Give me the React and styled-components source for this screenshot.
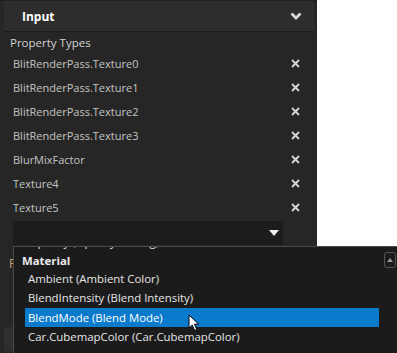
import React from "react";
import styled, { createGlobalStyle } from "styled-components";

const GlobalStyle = createGlobalStyle`
  html, body {
    margin: 0;
    padding: 0;
    background: #ffffff;
  }
  body {
    font-family: "Open Sans", "Noto Sans", sans-serif;
    -webkit-font-smoothing: antialiased;
  }
`;

const propertyTypes = [
  "BlitRenderPass.Texture0",
  "BlitRenderPass.Texture1",
  "BlitRenderPass.Texture2",
  "BlitRenderPass.Texture3",
  "BlurMixFactor",
  "Texture4",
  "Texture5",
];

const materialItems = [
  { label: "Ambient (Ambient Color)" },
  { label: "BlendIntensity (Blend Intensity)" },
  { label: "BlendMode (Blend Mode)", selected: true },
  { label: "Car.CubemapColor (Car.CubemapColor)" },
];

function ChevronDown() {
  return (
    <svg width="12" height="8" viewBox="0 0 12 8">
      <path d="M1.5 1.5 L6 6 L10.5 1.5" fill="none" stroke="#d9d9d9" strokeWidth="2.8" />
    </svg>
  );
}

function CloseIcon() {
  return (
    <svg width="9" height="9" viewBox="0 0 9 9">
      <path d="M1 1 L8 8 M8 1 L1 8" stroke="#d6d6d6" strokeWidth="1.8" />
    </svg>
  );
}

function Caret() {
  return (
    <svg width="10" height="6" viewBox="0 0 10 6">
      <path d="M0 0 H10 L5 6 Z" fill="#f0f0f0" />
    </svg>
  );
}

function Pointer() {
  return (
    <svg width="14" height="18" viewBox="0 0 14 18">
      <path
        d="M1 1 L1 14 L4.2 11 L6.6 16.5 L8.8 15.5 L6.5 10.2 L10.8 10.2 Z"
        fill="#ffffff"
        stroke="#000000"
        strokeWidth="1"
      />
    </svg>
  );
}

function ScrollUp() {
  return (
    <svg width="6" height="4" viewBox="0 0 6 4">
      <path d="M0 4 L3 0 L6 4 Z" fill="#9a9a9a" />
    </svg>
  );
}

export default function App() {
  return (
    <>
      <GlobalStyle />
      <Stage>
        <Panel>
          <Header>
            <HeaderTitle>Input</HeaderTitle>
            <ChevronDown />
          </Header>
          <Body>
            <SectionLabel>Property Types</SectionLabel>
            {propertyTypes.map((name) => (
              <Row key={name}>
                <RowText>{name}</RowText>
                <RemoveButton>
                  <CloseIcon />
                </RemoveButton>
              </Row>
            ))}
            <ComboBox>
              <Caret />
            </ComboBox>
            <NextLabel>P</NextLabel>
            <LowerBlock />
          </Body>
        </Panel>

        <Popup>
          <PopupList>
            <ClippedItem>Opacity (Opacity Scaling)</ClippedItem>
            <GroupTitle>Material</GroupTitle>
            {materialItems.map((item) => (
              <Item key={item.label} $selected={item.selected}>
                {item.label}
                {item.selected && (
                  <CursorSpot>
                    <Pointer />
                  </CursorSpot>
                )}
              </Item>
            ))}
          </PopupList>
          <ScrollBar>
            <ScrollButton>
              <ScrollUp />
            </ScrollButton>
          </ScrollBar>
        </Popup>
      </Stage>
    </>
  );
}

const Stage = styled.div`
  position: relative;
  width: 397px;
  height: 353px;
  overflow: hidden;
  background: #ffffff;
`;

const Panel = styled.div`
  width: 317px;
  height: 353px;
  background: #262626;
  border-top: 1px solid #1f1f1f;
  box-sizing: border-box;
  display: flex;
  flex-direction: column;
  overflow: hidden;
`;

const Header = styled.div`
  flex-shrink: 0;
  margin-left: 4px;
  margin-right: 3px;
  height: 30px;
  background: #2d2d2d;
  border-bottom: 1px solid #1c1c1c;
  display: flex;
  align-items: center;
  justify-content: space-between;
  padding: 0 12px 0 18px;
`;

const HeaderTitle = styled.span`
  color: #ffffff;
  font-weight: 700;
  font-size: 12px;
`;

const Body = styled.div`
  flex-shrink: 0;
  display: flex;
  flex-direction: column;
  padding-top: 3px;
`;

const SectionLabel = styled.div`
  color: #d2d2d2;
  font-size: 11.5px;
  line-height: 16px;
  padding-left: 10px;
`;

const Row = styled.div`
  height: 24px;
  display: flex;
  align-items: center;
  justify-content: space-between;
  padding-left: 13px;
  padding-right: 17px;
`;

const RowText = styled.span`
  color: #c4c4c4;
  font-size: 11px;
`;

const RemoveButton = styled.span`
  display: flex;
  align-items: center;
`;

const ComboBox = styled.div`
  margin: 2px 0 0 13px;
  width: 270px;
  height: 24px;
  background: #1c1c1c;
  display: flex;
  align-items: center;
  justify-content: flex-end;
  padding-right: 4px;
  box-sizing: border-box;
`;

const NextLabel = styled.div`
  margin: 12px 0 0 9px;
  font-size: 12px;
  color: #c8a070;
  line-height: 14px;
`;

const LowerBlock = styled.div`
  margin: 56px 0 0 4px;
  width: 9px;
  height: 24px;
  background: #2f2f2f;
`;

const Popup = styled.div`
  position: absolute;
  left: 13px;
  top: 246px;
  width: 400px;
  height: 120px;
  background: #1b1b1b;
  border: 1px solid #4a4a4a;
  box-sizing: border-box;
  display: flex;
`;

const PopupList = styled.div`
  width: 365px;
  box-sizing: border-box;
  flex-shrink: 0;
  overflow: hidden;
  display: flex;
  flex-direction: column;
  padding-left: 11px;
`;

const ClippedItem = styled.div`
  margin-top: -15px;
  padding-left: 4px;
  font-size: 11.4px;
  line-height: 19.5px;
  color: #e6e6e6;
`;

const GroupTitle = styled.div`
  font-weight: 700;
  font-size: 11.4px;
  line-height: 17px;
  color: #ececec;
  margin-left: -3px;
`;

const Item = styled.div`
  position: relative;
  height: 19.5px;
  line-height: 19.5px;
  font-size: 11.4px;
  padding-left: 3px;
  color: ${(p) => (p.$selected ? "#ffffff" : "#e6e6e6")};
  background: ${(p) => (p.$selected ? "#0a7bcc" : "transparent")};
`;

const CursorSpot = styled.span`
  position: absolute;
  left: 163px;
  top: 6px;
  line-height: 0;
`;

const ScrollBar = styled.div`
  flex: 1;
  display: flex;
  flex-direction: column;
  padding: 5px 0 0 5px;
`;

const ScrollButton = styled.div`
  width: 10px;
  height: 14px;
  border: 1px solid #555555;
  border-radius: 3px;
  display: flex;
  align-items: center;
  justify-content: center;
`;
